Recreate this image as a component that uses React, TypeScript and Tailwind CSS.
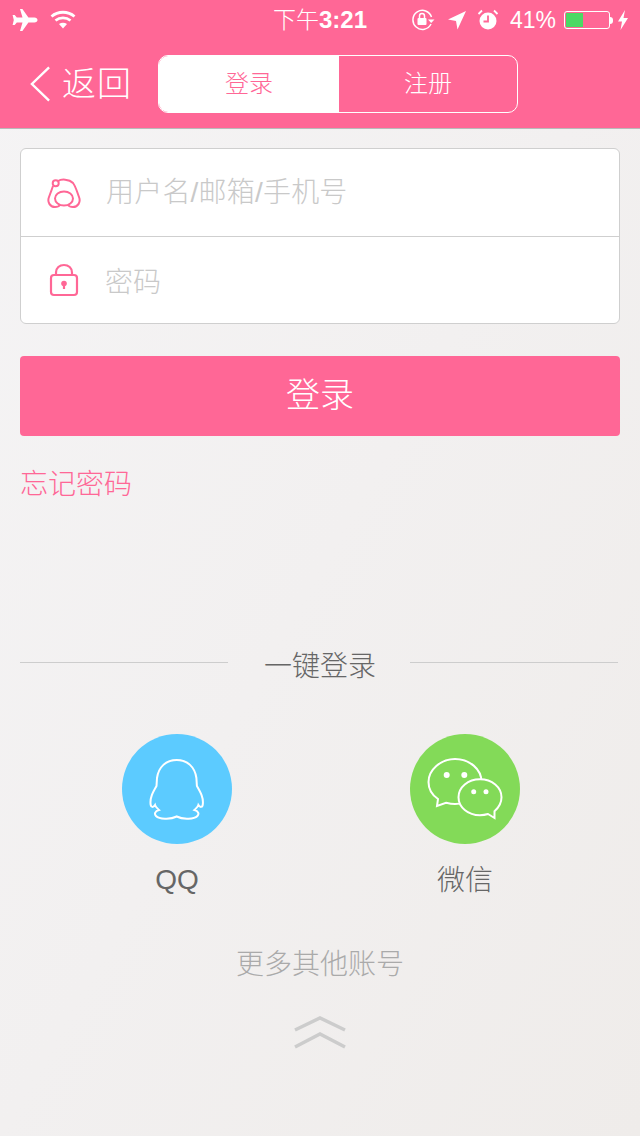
const fontStack = { fontFamily: '"Liberation Sans", "Noto Sans CJK SC", sans-serif' };

function StatusBar() {
  return (
    <div className="flex h-10 items-center pl-3 pr-3 text-white">
      <div className="flex flex-1 items-center gap-3">
        <svg width="26" height="24" viewBox="0 0 26 24" fill="white">
          <path d="M8 1h2.400l6 8.600h6c1.800 0 3.100 1 3.100 2.400s-1.300 2.400-3.100 2.400h-6l-6 8.600H8l2.500-8.600H4.800L2.700 17H.6l1.200-5L.6 7h2.100l2.100 2.600h5.700z" />
        </svg>
        <svg width="26" height="20" viewBox="0 0 26 20" fill="none" stroke="white" strokeWidth="2.800">
          <path d="M1.500 6.500C8 .8 18 .8 24.500 6.500" />
          <path d="M5.500 10.500C9.800 7 16.200 7 20.500 10.500" />
          <path d="M13 18.500 9 14c2.400-1.700 5.600-1.700 8 0z" fill="white" stroke="none" />
        </svg>
      </div>
      <span className="text-[24px] leading-none">
        <span className="text-[23px] font-light">下午</span>
        <span className="font-bold">3:21</span>
      </span>
      <div className="flex flex-1 items-center justify-end">
        <svg width="24" height="22" viewBox="0 0 24 22" fill="none" stroke="white" strokeWidth="1.500">
          <path d="M20.500 8A9.500 9.500 0 1 0 20 15" />
          <path d="M17 10.500h6.500L20.200 14z" fill="white" stroke="none" />
          <rect x="6.500" y="9" width="9" height="7" rx="1" fill="white" stroke="none" />
          <path d="M8.500 9V7a2.500 2.500 0 0 1 5 0v2" />
        </svg>
        <svg className="ml-[12px]" width="20" height="20" viewBox="0 0 20 20" fill="white">
          <path d="M19 1 10.500 19.500 9 11 1 9.500z" />
        </svg>
        <svg className="ml-[10px]" width="22" height="22" viewBox="0 0 22 22" fill="white">
          <circle cx="11" cy="12" r="8.500" />
          <path d="M11 6.500V12.500H6.500" fill="none" stroke="#ff6796" strokeWidth="1.800" />
          <path d="M1.500 5 5 1.500M20.500 5 17 1.500" fill="none" stroke="white" strokeWidth="1.800" />
        </svg>
        <span className="ml-[11px] text-[23px] leading-none font-light">41%</span>
        <div className="ml-2 flex items-center">
          <div className="h-[18px] w-[46px] rounded-[3px] border border-white p-[1px]">
            <div className="h-full w-[17px] bg-[#4cd964]" />
          </div>
          <div className="h-[7px] w-[3px] rounded-r-sm bg-white" />
        </div>
        <svg className="ml-[5px]" width="10" height="20" viewBox="0 0 10 20" fill="white">
          <path d="M7 0 0 11.500h4L2.500 20 10 8H5.500z" />
        </svg>
      </div>
    </div>
  );
}

function NavBar() {
  return (
    <div className="flex h-[88px] items-start text-white">
      <div className="ml-[30px] mt-[25px] flex w-[102px] items-center">
        <svg width="22" height="38" viewBox="0 0 22 38" fill="none" stroke="white" strokeWidth="2.500">
          <path d="M20 1.500 2 19l18 17.500" />
        </svg>
        <span className="ml-[11px] text-[34px] leading-none font-light tracking-[1px] whitespace-nowrap">返回</span>
      </div>
      <div className="ml-[26px] mt-[15px] flex h-[58px] w-[360px] overflow-hidden rounded-[10px] border border-white">
        <div className="flex w-[180px] items-center justify-center bg-white text-[24px] font-light text-[#ff6796]">登录</div>
        <div className="flex flex-1 items-center justify-center text-[24px] font-light">注册</div>
      </div>
    </div>
  );
}

function UserIcon() {
  return (
    <svg width="34" height="30" viewBox="0 0 34 30" fill="none" stroke="#ff6796" strokeWidth="2">
      <path d="M11 3c3-2 11-2.200 15 2 3 4 4 9 6 14 2 5-1 10-6 10-2.500 0-4-.5-5-2" />
      <path d="M13 27c-1 1.500-3 2-5 2-5 0-8-5-6-10 1.500-4 3-8 4-11" />
      <circle cx="8.700" cy="5.300" r="3" fill="white" />
      <ellipse cx="17" cy="20.500" rx="9" ry="7" />
    </svg>
  );
}

function LockIcon() {
  return (
    <svg width="30" height="34" viewBox="0 0 30 34" fill="none" stroke="#ff6796" strokeWidth="2.200">
      <rect x="2" y="12" width="26" height="20" rx="3" />
      <path d="M7 12V9.500C7 5 10.500 2 15 2s8 3 8 7.500V12" />
      <circle cx="15" cy="20.500" r="2.800" fill="#ff6796" stroke="none" />
      <path d="M15 21v5" />
    </svg>
  );
}

function QQIcon() {
  return (
    <svg width="110" height="110" viewBox="0 0 110 110" fill="none" stroke="white" strokeWidth="2">
      <path d="M54.700 26C44 26 36.500 33 35 44l-.5 8C31 58 27.500 64 28.700 71c.3 2 2.300 3 4.300 0 .5 2 3 4 4 5-4 1-5 4-3 6 3 3 14 4 20.700.5 6.700 3.500 17.700 2.500 20.700-.5 2-2 1-5-3-6 1-1 3.500-3 4-5 2 3 4 2 4.300 0 1.200-7-2.300-13-5.800-19l-.5-8C72.900 33 65.400 26 54.700 26z" />
    </svg>
  );
}

function WechatIcon() {
  return (
    <svg width="110" height="110" viewBox="0 0 110 110" fill="none" stroke="white" strokeWidth="2">
      <path d="M27 72l1-7c-6-4-9.500-10-9.500-17 0-12 12-23 26.500-23s26.500 10 26.500 23c0 12-12 22-26.500 22-3 0-6-.5-9-1.200z" />
      <circle cx="36.700" cy="41" r="3" fill="white" stroke="none" />
      <circle cx="54.300" cy="41" r="3" fill="white" stroke="none" />
      <path d="M84.500 84l-6.500-4c-2.500.8-5 1.200-8 1.200-12 0-21.500-8-21.500-18s9.500-18 21.500-18 21.500 8 21.500 18c0 5.500-3 10.500-7 14z" fill="#83da58" />
      <circle cx="63.700" cy="57.700" r="2.500" fill="white" stroke="none" />
      <circle cx="76" cy="57.700" r="2.500" fill="white" stroke="none" />
    </svg>
  );
}

export default function App() {
  return (
    <div
      className="flex h-[1136px] w-[640px] flex-col overflow-hidden bg-gradient-to-br from-[#f5f4f5] via-[#f2f0f0] to-[#efecea]"
      style={fontStack}
    >
      <header className="h-[129px] border-b border-[#b9b9b9] bg-[#ff6796]">
        <StatusBar />
        <NavBar />
      </header>

      <main className="flex flex-1 flex-col px-5 pt-[19px]">
        {/* Login form */}
        <div className="flex h-[176px] flex-col overflow-hidden rounded-md border border-[#cfcfcf] bg-white">
          <div className="flex h-[88px] items-center border-b border-[#cfcfcf]">
            <div className="ml-[26px] flex w-[59px]"><UserIcon /></div>
            <span className="text-[28px] font-light tracking-[0.2px] text-[#c9c9c9]">用户名/邮箱/手机号</span>
          </div>
          <div className="flex flex-1 items-center">
            <div className="ml-[28px] flex w-[56px]"><LockIcon /></div>
            <span className="pt-[6px] text-[28px] font-light text-[#c9c9c9]">密码</span>
          </div>
        </div>

        <button className="mt-8 flex h-20 w-full items-center justify-center rounded bg-[#ff6796] pb-[2px] text-[34px] font-light text-white">
          登录
        </button>

        <p className="mt-[28px] pt-[1px] text-[28px] leading-10 font-light text-[#ff6796]">忘记密码</p>

        {/* One tap login */}
        <div className="mt-[140px] flex items-start">
          <div className="mt-[17px] h-px w-[208px] bg-[#cdcdcd]" />
          <span className="ml-[36px] w-[112px] pt-[2px] text-[28px] leading-10 font-light whitespace-nowrap text-[#666]">一键登录</span>
          <div className="ml-[34px] mt-[17px] h-px w-[208px] bg-[#cdcdcd]" />
        </div>

        <div className="ml-[102px] mt-[47px] flex gap-[178px]">
          <div className="flex w-[110px] flex-col items-center">
            <div className="h-[110px] w-[110px] rounded-full bg-[#5ccbff]"><QQIcon /></div>
            <span className="mt-[16px] text-[28px] leading-10 font-light text-[#666]">QQ</span>
          </div>
          <div className="flex w-[110px] flex-col items-center">
            <div className="h-[110px] w-[110px] rounded-full bg-[#83da58]"><WechatIcon /></div>
            <span className="mt-[17px] text-[28px] leading-10 font-light text-[#666]">微信</span>
          </div>
        </div>

        <p className="mt-[44px] text-center text-[28px] leading-10 font-light text-[#aaa]">更多其他账号</p>

        <div className="mt-[30px] flex justify-center">
          <svg width="56" height="36" viewBox="0 0 56 36" fill="none" stroke="#ccc" strokeWidth="3.500">
            <path d="M3 15 28 3l25 12" />
            <path d="M3 32 28 19l25 13" />
          </svg>
        </div>
      </main>
    </div>
  );
}
